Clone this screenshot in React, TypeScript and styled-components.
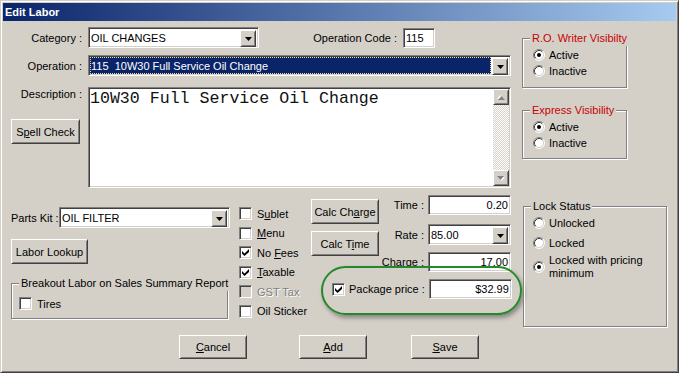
import React from "react";
import styled, { createGlobalStyle, css } from "styled-components";

const UI_FONT = `"Liberation Sans", Arial, sans-serif`;

const GlobalStyle = createGlobalStyle`
  html, body {
    margin: 0;
    padding: 0;
    background: #d4d0c8;
  }
  body {
    font-family: ${UI_FONT};
    font-size: 11px;
    color: #000;
  }
`;

const sunken = css`
  border: 1px solid;
  border-color: #808080 #fff #fff #808080;
  box-shadow: inset 1px 1px 0 #404040, inset -1px -1px 0 #d4d0c8;
`;

const raised = css`
  border: 1px solid;
  border-color: #fff #404040 #404040 #fff;
  box-shadow: inset 1px 1px 0 #d4d0c8, inset -1px -1px 0 #808080;
`;

const Window = styled.div`
  width: 679px;
  height: 373px;
  box-sizing: border-box;
  background: #d4d0c8;
  border: 1px solid;
  border-color: #d4d0c8 #404040 #404040 #d4d0c8;
  box-shadow: inset 1px 1px 0 #fff, inset -1px -1px 0 #808080;
  padding: 2px;
  display: flex;
  flex-direction: column;
  overflow: hidden;
`;

const TitleBar = styled.div`
  height: 18px;
  flex-shrink: 0;
  display: flex;
  align-items: center;
  padding-left: 2px;
  background: linear-gradient(to right, #0a246a, #a6caf0);
  color: #fff;
  font-weight: 700;
  font-size: 11px;
`;

const Body = styled.div`
  display: flex;
  padding: 6px 0 0 8px;
`;

const LeftPane = styled.div`
  width: 500px;
  display: flex;
  flex-direction: column;
`;

const RightPane = styled.div`
  margin-left: 11px;
  padding-top: 11px;
  display: flex;
  flex-direction: column;
`;

const Row = styled.div<{ $mt?: number; $h?: number; $gap?: number; $top?: boolean; $pl?: number }>`
  display: flex;
  align-items: ${(p) => (p.$top ? "flex-start" : "center")};
  margin-top: ${(p) => p.$mt ?? 0}px;
  padding-left: ${(p) => p.$pl ?? 0}px;
  height: ${(p) => (p.$h ? `${p.$h}px` : "auto")};
  gap: ${(p) => p.$gap ?? 0}px;
`;

const Label = styled.span<{ $w?: number }>`
  width: ${(p) => (p.$w ? `${p.$w}px` : "auto")};
  flex: ${(p) => (p.$w ? "none" : "1")};
  text-align: right;
  white-space: nowrap;
  line-height: 14px;
`;

const Field = styled.div<{ $w: number; $h?: number; $right?: boolean }>`
  ${sunken};
  box-sizing: border-box;
  width: ${(p) => p.$w}px;
  height: ${(p) => p.$h ?? 20}px;
  flex-shrink: 0;
  background: #fff;
  display: flex;
  align-items: center;
  justify-content: ${(p) => (p.$right ? "flex-end" : "flex-start")};
  padding: ${(p) => (p.$right ? "0 2px 0 0" : "0 0 0 2px")};
  white-space: nowrap;
  overflow: hidden;
`;

const Combo = styled(Field)`
  padding: 0 0 0 2px;
  align-items: stretch;
`;

const ComboText = styled.span<{ $selected?: boolean }>`
  flex: 1;
  display: flex;
  align-items: center;
  ${(p) =>
    p.$selected &&
    css`
      margin: 1px 1px 1px -1px;
      padding-left: 1px;
      background: #0a246a;
      color: #fff;
      outline: 1px dotted #f3d98e;
      outline-offset: -1px;
    `}
`;

const DropButton = styled.span`
  ${raised};
  box-sizing: border-box;
  width: 16px;
  height: 17px;
  margin: 2px 2px 2px 0;
  background: #d4d0c8;
  display: flex;
  align-items: center;
  justify-content: center;
`;

const Button = styled.button<{ $w: number; $h?: number; $mt?: number; $ml?: number }>`
  ${raised};
  box-sizing: border-box;
  width: ${(p) => p.$w}px;
  height: ${(p) => p.$h ?? 25}px;
  margin-top: ${(p) => p.$mt ?? 0}px;
  margin-left: ${(p) => p.$ml ?? 0}px;
  padding: 0;
  flex-shrink: 0;
  background: #d4d0c8;
  color: #000;
  font: inherit;
  line-height: 14px;
  white-space: nowrap;
`;

const DescCol = styled.div`
  width: 71px;
  display: flex;
  flex-direction: column;
  align-items: flex-end;
`;

const TextBox = styled.div`
  ${sunken};
  box-sizing: border-box;
  width: 423px;
  height: 101px;
  background: #fff;
  display: flex;
`;

const TextContent = styled.div`
  flex: 1;
  padding: 2px 0 0 1px;
  font-family: "Liberation Mono", "Courier New", monospace;
  font-size: 16.6px;
  line-height: 18px;
  color: #111;
  white-space: pre;
`;

const ScrollBar = styled.div`
  width: 16px;
  margin: 1px 1px 1px 0;
  display: flex;
  flex-direction: column;
`;

const ScrollTrack = styled.div`
  flex: 1;
  background: repeating-conic-gradient(#d4d0c8 0 25%, #fff 0 50%) 0 0 / 2px 2px;
`;

const ScrollButton = styled.span`
  ${raised};
  box-sizing: border-box;
  height: 16px;
  background: #d4d0c8;
  display: flex;
  align-items: center;
  justify-content: center;
`;

const Lower = styled.div`
  position: relative;
  display: flex;
  margin-top: 7px;
  height: 132px;
`;

const ColA = styled.div`
  width: 219px;
  padding-top: 12px;
  display: flex;
  flex-direction: column;
  align-items: flex-start;
`;

const ColB = styled.div`
  width: 72px;
  margin-left: 9px;
  padding-top: 9px;
  display: flex;
  flex-direction: column;
`;

const CheckRow = styled.div<{ $disabled?: boolean }>`
  height: 19.5px;
  display: flex;
  align-items: center;
  gap: 5px;
  white-space: nowrap;
  color: ${(p) => (p.$disabled ? "#808080" : "#000")};
  text-shadow: ${(p) => (p.$disabled ? "1px 1px 0 #fff" : "none")};
`;

const Box = styled.span<{ $disabled?: boolean }>`
  ${sunken};
  box-sizing: border-box;
  width: 13px;
  height: 13px;
  flex-shrink: 0;
  background: ${(p) => (p.$disabled ? "#d4d0c8" : "#fff")};
  display: flex;
  align-items: center;
  justify-content: center;
`;

const CalcArea = styled.div`
  width: 200px;
  display: flex;
  flex-direction: column;
`;

const CalcTop = styled.div`
  display: flex;
`;

const CalcButtons = styled.div`
  width: 68px;
  display: flex;
  flex-direction: column;
`;

const CalcFields = styled.div`
  flex: 1;
  display: flex;
  flex-direction: column;
`;

const Highlight = styled.div`
  position: absolute;
  left: 310px;
  top: 71px;
  width: 201px;
  height: 49px;
  box-sizing: border-box;
  border: 2px solid #24892a;
  border-radius: 25px;
  box-shadow: 2px 3px 4px rgba(0, 0, 0, 0.35);
  pointer-events: none;
`;

const GroupBox = styled.div<{ $w: number; $h: number; $mt?: number; $ml?: number; $pl?: number; $pt?: number }>`
  position: relative;
  box-sizing: border-box;
  width: ${(p) => p.$w}px;
  height: ${(p) => p.$h}px;
  margin-top: ${(p) => p.$mt ?? 0}px;
  margin-left: ${(p) => p.$ml ?? 0}px;
  padding: ${(p) => p.$pt ?? 8}px 0 0 ${(p) => p.$pl ?? 10}px;
  border: 1px solid #808080;
  box-shadow: 1px 1px 0 #fff, inset 1px 1px 0 #fff;
  display: flex;
  flex-direction: column;
`;

const Legend = styled.span<{ $red?: boolean }>`
  position: absolute;
  top: -8px;
  left: 7px;
  padding: 0 2px;
  background: #d4d0c8;
  line-height: 15px;
  white-space: nowrap;
  color: ${(p) => (p.$red ? "#c80000" : "#000")};
`;

const RadioRow = styled.div<{ $mt?: number }>`
  display: flex;
  align-items: center;
  gap: 4px;
  min-height: 16px;
  margin-top: ${(p) => p.$mt ?? 0}px;
  line-height: 13px;
`;

const Actions = styled.div`
  display: flex;
  margin-top: 8px;
`;

const Arrow = () => (
  <svg width="7" height="4" viewBox="0 0 7 4">
    <path d="M0 0h7L3.5 4z" fill="#000" />
  </svg>
);

const ScrollArrow = ({ up }: { up?: boolean }) => (
  <svg width="8" height="5" viewBox="0 0 8 5" style={{ transform: up ? "rotate(180deg)" : undefined }}>
    <path d="M1 1h7L4.5 5z" fill="#fff" />
    <path d="M0 0h7L3.5 4z" fill="#808080" />
  </svg>
);

const CheckMark = () => (
  <svg width="7" height="7" viewBox="0 0 7 7">
    <path d="M0 2L2.5 4.5L7 0V3L2.5 7L0 4.5Z" fill="#000" />
  </svg>
);

const CheckBox = ({ checked, disabled, children }: { checked?: boolean; disabled?: boolean; children: React.ReactNode }) => (
  <CheckRow $disabled={disabled}>
    <Box $disabled={disabled}>{checked && <CheckMark />}</Box>
    <span>{children}</span>
  </CheckRow>
);

const RadioIcon = ({ checked }: { checked?: boolean }) => (
  <svg width="12" height="12" viewBox="0 0 12 12" style={{ flexShrink: 0 }}>
    <circle cx="6" cy="6" r="5" fill="#fff" />
    <path d="M2.11 9.89A5.5 5.5 0 0 1 9.89 2.11" stroke="#808080" fill="none" />
    <path d="M9.89 2.11A5.5 5.5 0 0 1 2.11 9.89" stroke="#fff" fill="none" />
    <path d="M2.82 9.18A4.5 4.5 0 0 1 9.18 2.82" stroke="#404040" fill="none" />
    <path d="M9.18 2.82A4.5 4.5 0 0 1 2.82 9.18" stroke="#d4d0c8" fill="none" />
    {checked && <circle cx="6" cy="6" r="2" fill="#000" />}
  </svg>
);

const Radio = ({ checked, mt, children }: { checked?: boolean; mt?: number; children: React.ReactNode }) => (
  <RadioRow $mt={mt}>
    <RadioIcon checked={checked} />
    <span>{children}</span>
  </RadioRow>
);

export default function App() {
  return (
    <>
      <GlobalStyle />
      <Window>
        <TitleBar>Edit Labor</TitleBar>
        <Body>
          <LeftPane>
            <Row $h={21} $gap={6}>
              <Label $w={71}>Category :</Label>
              <Combo $w={171} $h={21}>
                <ComboText>OIL CHANGES</ComboText>
                <DropButton><Arrow /></DropButton>
              </Combo>
              <Label $w={132}>Operation Code :</Label>
              <Field $w={32}>115</Field>
            </Row>
            <Row $h={21} $gap={6} $mt={7}>
              <Label $w={71}>Operation :</Label>
              <Combo $w={423} $h={21}>
                <ComboText $selected>115&nbsp;&nbsp;10W30 Full Service Oil Change</ComboText>
                <DropButton><Arrow /></DropButton>
              </Combo>
            </Row>
            <Row $mt={11} $gap={6} $top>
              <DescCol>
                <Label $w={71}>Description :</Label>
                <Button $w={69} $mt={18} style={{ alignSelf: "flex-start" }}>
                  S<u>p</u>ell Check
                </Button>
              </DescCol>
              <TextBox>
                <TextContent>10W30 Full Service Oil Change</TextContent>
                <ScrollBar>
                  <ScrollButton><ScrollArrow up /></ScrollButton>
                  <ScrollTrack />
                  <ScrollButton><ScrollArrow /></ScrollButton>
                </ScrollBar>
              </TextBox>
            </Row>

            <Lower>
              <ColA>
                <Row $h={21} $gap={3}>
                  <Label $w={45}>Parts Kit :</Label>
                  <Combo $w={171} $h={21}>
                    <ComboText>OIL FILTER</ComboText>
                    <DropButton><Arrow /></DropButton>
                  </Combo>
                </Row>
                <Button $w={77} $mt={11}>Labor Lookup</Button>
                <GroupBox $w={217} $h={36} $mt={19} $pl={7} $pt={10}>
                  <Legend>Breakout Labor on Sales Summary Report</Legend>
                  <CheckBox>Tires</CheckBox>
                </GroupBox>
              </ColA>

              <ColB>
                <CheckBox>S<u>u</u>blet</CheckBox>
                <CheckBox><u>M</u>enu</CheckBox>
                <CheckBox checked>No <u>F</u>ees</CheckBox>
                <CheckBox checked><u>T</u>axable</CheckBox>
                <CheckBox disabled>GST Tax</CheckBox>
                <CheckBox>Oil Sticker</CheckBox>
              </ColB>

              <CalcArea>
                <CalcTop>
                  <CalcButtons>
                    <Button $w={68} $mt={4}>Calc Ch<u>a</u>rge</Button>
                    <Button $w={68} $mt={7}>Calc T<u>i</u>me</Button>
                  </CalcButtons>
                  <CalcFields>
                    <Row $h={20} $gap={4}>
                      <Label>Time :</Label>
                      <Field $w={83} $right>0.20</Field>
                    </Row>
                    <Row $h={21} $gap={4} $mt={9}>
                      <Label>Rate :</Label>
                      <Combo $w={83} $h={21}>
                        <ComboText>85.00</ComboText>
                        <DropButton><Arrow /></DropButton>
                      </Combo>
                    </Row>
                    <Row $h={20} $gap={4} $mt={7}>
                      <Label>Charge :</Label>
                      <Field $w={83} $right>17.00</Field>
                    </Row>
                  </CalcFields>
                </CalcTop>
                <Row $h={20} $gap={4} $mt={7} $pl={21}>
                  <Box><CheckMark /></Box>
                  <Label>Package price :</Label>
                  <Field $w={83} $right>$32.99</Field>
                </Row>
              </CalcArea>

              <Highlight />
            </Lower>

            <Actions>
              <Button $w={68} $h={24} $ml={168}><u>C</u>ancel</Button>
              <Button $w={68} $h={24} $ml={52}><u>A</u>dd</Button>
              <Button $w={68} $h={24} $ml={44}><u>S</u>ave</Button>
            </Actions>
          </LeftPane>

          <RightPane>
            <GroupBox $w={105} $h={50}>
              <Legend $red>R.O. Writer Visibilty</Legend>
              <Radio checked>Active</Radio>
              <Radio>Inactive</Radio>
            </GroupBox>
            <GroupBox $w={105} $h={49} $mt={22}>
              <Legend $red>Express Visibility</Legend>
              <Radio checked>Active</Radio>
              <Radio>Inactive</Radio>
            </GroupBox>
            <GroupBox $w={144} $h={121} $mt={47} $ml={1} $pl={9}>
              <Legend>Lock Status</Legend>
              <Radio>Unlocked</Radio>
              <Radio mt={4}>Locked</Radio>
              <Radio checked mt={3}>
                Locked with pricing
                <br />
                minimum
              </Radio>
            </GroupBox>
          </RightPane>
        </Body>
      </Window>
    </>
  );
}
